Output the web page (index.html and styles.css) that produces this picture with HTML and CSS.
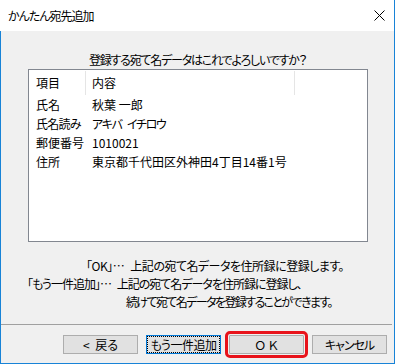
FILE: index.html
```html
<!DOCTYPE html>
<html lang="ja">
<head>
<meta charset="utf-8">
<title>かんたん宛先追加</title>
<link rel="stylesheet" href="styles.css">
</head>
<body>
<div class="window">
  <div class="titlebar">
    <span class="title">かんたん宛先追加</span>
    <span class="close">
      <svg width="11" height="11" viewBox="0 0 11 11"><path d="M0.5 0.5 L10.5 10.5 M10.5 0.5 L0.5 10.5" stroke="#000" stroke-width="1" fill="none"/></svg>
    </span>
  </div>
  <div class="client">
    <div class="question">登録する宛て名データはこれでよろしいですか？</div>
    <div class="listbox">
      <div class="lv-header">
        <div class="hcell c1">項目</div>
        <div class="hcell c2">内容</div>
      </div>
      <div class="lv-row"><span class="c1">氏名</span><span class="val">秋葉 一郎</span></div>
      <div class="lv-row"><span class="c1 tight">氏名読み</span><span class="val kata">アキバ イチロウ</span></div>
      <div class="lv-row"><span class="c1">郵便番号</span><span class="val">1010021</span></div>
      <div class="lv-row"><span class="c1">住所</span><span class="val">東京都千代田区外神田4丁目14番1号</span></div>
    </div>
    <div class="notes">
      <div class="note n1">「OK」… 上記の宛て名データを住所録に登録します。</div>
      <div class="note n2">「もう一件追加」… 上記の宛て名データを住所録に登録し、</div>
      <div class="note n3">続けて宛て名データを登録することができます。</div>
    </div>
    <div class="separator"></div>
    <div class="buttons">
      <button class="btn back">&lt; 戻る</button>
      <button class="btn focus">もう一件追加</button>
      <button class="btn marked">Ｏ Ｋ</button>
      <button class="btn narrow">キャンセル</button>
    </div>
  </div>
</div>
</body>
</html>
```

FILE: styles.css
```css
html, body {
  margin: 0;
  padding: 0;
}
body {
  width: 396px;
  height: 364px;
  background: #ffffff;
  font-family: "Noto Sans CJK JP", "Noto Sans", sans-serif;
  font-size: 12px;
  color: #000;
  font-feature-settings: "palt";
  overflow: hidden;
}
.window {
  width: 395px;
  height: 364px;
  box-sizing: border-box;
  border-right: 1px solid #1883d7;
  display: flex;
  flex-direction: column;
}
.titlebar {
  height: 31px;
  flex: 0 0 31px;
  background: #fff;
  display: flex;
  align-items: center;
  justify-content: space-between;
  padding-left: 8px;
}
.title {
  font-size: 12px;
  line-height: 16px;
  letter-spacing: -1px;
}
.close {
  width: 30px;
  height: 31px;
  display: flex;
  align-items: center;
  justify-content: center;
}
.close svg {
  display: block;
}
.client {
  flex: 1;
  background: #f0f0f0;
  border-left: 1px solid #1883d7;
  border-bottom: 1px solid #1883d7;
  padding-top: 21px;
}
.question {
  line-height: 16px;
  height: 16px;
  text-align: center;
  letter-spacing: -1.2px;
}
.listbox {
  margin-top: 1px;
  margin-left: 27px;
  width: 340px;
  height: 173px;
  box-sizing: border-box;
  border: 1px solid #828790;
  background: #fff;
}
.lv-header {
  display: flex;
  padding-top: 1px;
  height: 24px;
}
.hcell {
  height: 24px;
  line-height: 24px;
  box-sizing: border-box;
  border-right: 1px solid #e5e5e5;
}
.hcell.c1 {
  width: 57px;
  padding-left: 7px;
}
.hcell.c2 {
  width: 209px;
  padding-left: 6px;
}
.lv-row {
  display: flex;
  height: 19px;
  line-height: 19px;
}
.lv-row .c1 {
  width: 57px;
  padding-left: 7px;
  box-sizing: border-box;
  white-space: nowrap;
}
.lv-row .c1.tight {
  letter-spacing: -0.7px;
}
.lv-row .val {
  padding-left: 6px;
  white-space: pre;
}
.lv-row .val.kata {
  letter-spacing: -1.4px;
  word-spacing: 4px;
}
.notes {
  margin-top: 15px;
}
.note {
  line-height: 18px;
  height: 18px;
  white-space: pre;
  word-spacing: 4px;
}
.n1 { padding-left: 85px; letter-spacing: -0.5px; }
.n2 { padding-left: 26px; letter-spacing: -1px; }
.n3 { padding-left: 125px; letter-spacing: -1.6px; }
.separator {
  margin-top: 13px;
  margin-right: 2px;
  height: 1px;
  background: #a0a0a0;
}
.buttons {
  margin-top: 10px;
  padding-left: 62px;
  display: flex;
  gap: 8px;
}
.btn {
  width: 75px;
  height: 19px;
  box-sizing: border-box;
  margin: 0;
  padding: 0;
  background: #e1e1e1;
  border: 1px solid #adadad;
  border-radius: 0;
  font-family: inherit;
  font-size: 12px;
  font-feature-settings: "palt";
  color: #000;
  line-height: 16px;
  text-align: center;
  white-space: pre;
}
.btn.back {
  word-spacing: 3px;
}
.btn.narrow {
  letter-spacing: -1px;
}
.btn.focus {
  border-color: #0078d7;
  outline: 1px dotted #000;
  outline-offset: -2px;
  letter-spacing: -0.5px;
}
.btn.marked {
  outline: 3px solid #e8131b;
  outline-offset: 1px;
  border-radius: 1px;
}
```
